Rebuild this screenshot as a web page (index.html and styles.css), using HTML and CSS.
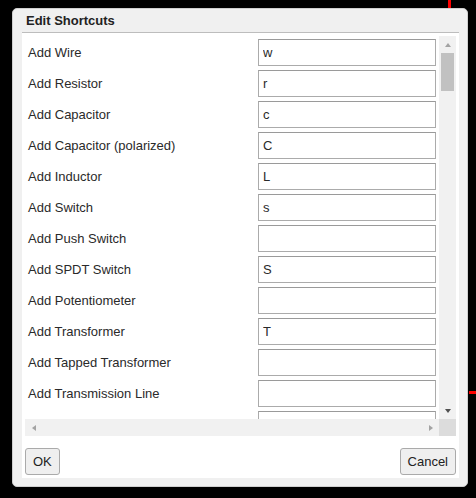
FILE: index.html
```html
<!DOCTYPE html>
<html>
<head>
<meta charset="utf-8">
<link rel="stylesheet" href="styles.css">
</head>
<body>
<div class="mark mark-v"></div>
<div class="mark mark-h"></div>
<div class="dialog">
  <div class="title">Edit Shortcuts</div>
  <div class="panel">
    <div class="scroller">
      <div class="content">
        <div class="label">Add Wire</div><input class="field" value="w">
        <div class="label">Add Resistor</div><input class="field" value="r">
        <div class="label">Add Capacitor</div><input class="field" value="c">
        <div class="label">Add Capacitor (polarized)</div><input class="field" value="C">
        <div class="label">Add Inductor</div><input class="field" value="L">
        <div class="label">Add Switch</div><input class="field" value="s">
        <div class="label">Add Push Switch</div><input class="field" value="">
        <div class="label">Add SPDT Switch</div><input class="field" value="S">
        <div class="label">Add Potentiometer</div><input class="field" value="">
        <div class="label">Add Transformer</div><input class="field" value="T">
        <div class="label">Add Tapped Transformer</div><input class="field" value="">
        <div class="label">Add Transmission Line</div><input class="field" value="">
        <div class="label"></div><input class="field" value="">
      </div>
      <div class="vbar">
        <div class="sbtn"><span class="arr arr-up"></span></div>
        <div class="track"><div class="thumb"></div></div>
        <div class="sbtn"><span class="arr arr-down"></span></div>
      </div>
      <div class="hbar">
        <div class="sbtn"><span class="arr arr-left"></span></div>
        <div class="htrack"></div>
        <div class="sbtn"><span class="arr arr-right"></span></div>
      </div>
      <div class="corner"></div>
    </div>
    <div class="footer">
      <button class="btn">OK</button>
      <button class="btn">Cancel</button>
    </div>
  </div>
</div>
</body>
</html>
```

FILE: styles.css
```css
html, body {
  margin: 0;
  padding: 0;
  background: #000;
  width: 476px;
  height: 498px;
  overflow: hidden;
  font-family: "Liberation Sans", Arial, sans-serif;
  font-size: 13px;
  color: #222;
}

.mark {
  position: absolute;
  background: #ff0000;
}
.mark-v { left: 448px; top: 0; width: 3px; height: 9px; }
.mark-h { left: 469px; top: 391px; width: 7px; height: 3px; }

.dialog {
  position: absolute;
  left: 12px;
  top: 8px;
  width: 456px;
  height: 479px;
  box-sizing: border-box;
  background: #f0f0f0;
  border: 1px solid #cfcfcf;
  border-radius: 5px;
  padding: 0 8px 8px 9px;
  display: flex;
  flex-direction: column;
}

.title {
  height: 23px;
  line-height: 23px;
  padding-left: 4px;
  font-weight: bold;
  color: #222;
}

.panel {
  flex: 1;
  background: #fff;
  border-top: 1px solid #bdbdbd;
  padding: 3px 3px 3px 3px;
  display: flex;
  flex-direction: column;
}

.scroller {
  height: 400px;
  display: grid;
  grid-template-columns: 414px 17px;
  grid-template-rows: 383px 17px;
}

.content {
  overflow: hidden;
  display: grid;
  grid-template-columns: 230px 178px;
  grid-auto-rows: 27px;
  row-gap: 4px;
  align-items: center;
  padding: 3px 0 0 3px;
}

.label {
  white-space: nowrap;
  color: #2a2a2a;
}

.field {
  box-sizing: border-box;
  width: 178px;
  height: 27px;
  margin: 0;
  border: 1px solid #ababab;
  border-top-color: #9a9a9a;
  border-radius: 0;
  padding: 0 4px;
  font-family: "Liberation Sans", Arial, sans-serif;
  font-size: 13px;
  color: #2a2a2a;
  background: #fff;
  outline: none;
}

.vbar {
  background: #f1f1f1;
  display: flex;
  flex-direction: column;
}
.hbar {
  background: #f1f1f1;
  display: flex;
  flex-direction: row;
}
.sbtn {
  width: 17px;
  height: 17px;
  flex: none;
  display: flex;
  align-items: center;
  justify-content: center;
}
.track {
  flex: 1;
  padding-left: 2px;
}
.htrack { flex: 1; }
.thumb {
  width: 13px;
  height: 38px;
  background: #c1c1c1;
}
.corner { background: #dcdcdc; }

.arr { width: 0; height: 0; display: block; }
.arr-up {
  border-left: 3.5px solid transparent;
  border-right: 3.5px solid transparent;
  border-bottom: 4px solid #a3a3a3;
  margin-left: 1px;
}
.arr-down {
  border-left: 3.5px solid transparent;
  border-right: 3.5px solid transparent;
  border-top: 4px solid #505050;
  margin-left: 1px;
}
.arr-left {
  border-top: 3.5px solid transparent;
  border-bottom: 3.5px solid transparent;
  border-right: 4px solid #a3a3a3;
}
.arr-right {
  border-top: 3.5px solid transparent;
  border-bottom: 3.5px solid transparent;
  border-left: 4px solid #a3a3a3;
}

.footer {
  margin-top: 12px;
  display: flex;
  justify-content: space-between;
}

.btn {
  height: 27px;
  box-sizing: border-box;
  padding: 0 7px;
  margin: 0;
  background: #efefef;
  border: 1px solid #aaaaaa;
  border-radius: 3px;
  font-family: "Liberation Sans", Arial, sans-serif;
  font-size: 13px;
  color: #222;
}
```
